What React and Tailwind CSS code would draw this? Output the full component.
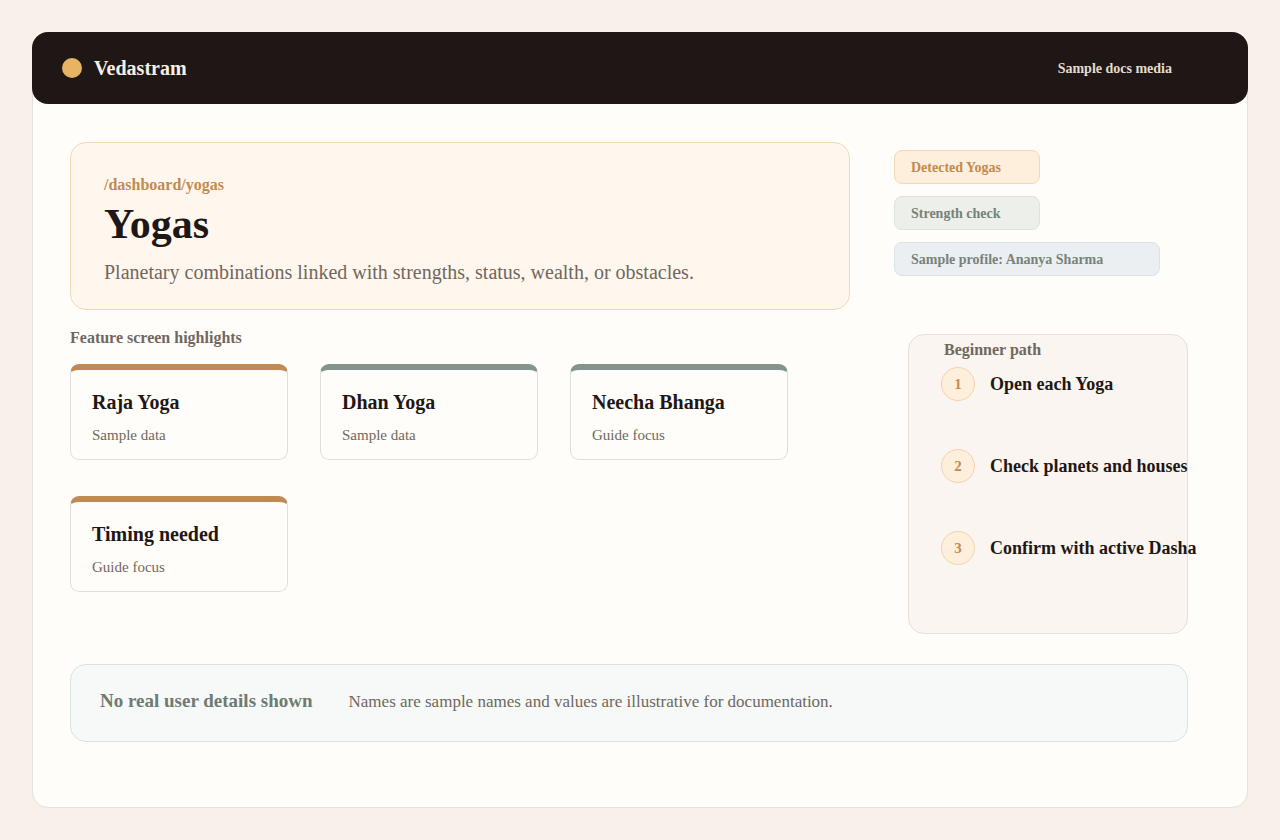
export default function App() {
  const serif = { fontFamily: '"Liberation Serif", "Times New Roman", serif' };
  const cards = [
    { title: "Raja Yoga", sub: "Sample data", bar: "border-t-[#bf8a55]" },
    { title: "Dhan Yoga", sub: "Sample data", bar: "border-t-[#83948f]" },
    { title: "Neecha Bhanga", sub: "Guide focus", bar: "border-t-[#83948f]" },
    { title: "Timing needed", sub: "Guide focus", bar: "border-t-[#bf8a55]" },
  ];
  const steps = ["Open each Yoga", "Check planets and houses", "Confirm with active Dasha"];
  return (
    <div className="min-h-screen bg-[#f7f0eb] p-8" style={serif}>
      <div className="w-[1216px] h-[776px] rounded-2xl border border-[#e6e0da] bg-[#fffdf9]">
        <header className="h-[72px] rounded-2xl bg-[#1f1715] flex items-center justify-between pl-[30px] pr-[76px] -mx-px -mt-px">
          <div className="flex items-center gap-3">
            <span className="w-5 h-5 rounded-full bg-[#e8b463]" />
            <span className="text-[20px] font-bold text-[#f6efe6]">Vedastram</span>
          </div>
          <span className="text-[14px] font-bold text-[#e5dbcf]">Sample docs media</span>
        </header>
        <div className="px-[37px] pt-[38px]">
          <div className="flex">
            <div className="w-[780px]">
              <section className="h-[168px] rounded-2xl border border-[#f2dab5] bg-[#fff7ee] pl-[33px] pt-[32px]">
                <div className="text-[16px] leading-[20px] font-bold text-[#c38a4f]">/dashboard/yogas</div>
                <h1 className="mt-[5px] text-[42px] leading-[48px] font-bold text-[#1f1715]">Yogas</h1>
                <p className="mt-[11px] text-[20px] leading-[26px] text-[#6f6760]">
                  Planetary combinations linked with strengths, status, wealth, or obstacles.
                </p>
              </section>
              <div className="mt-[18px] text-[16px] leading-[20px] font-bold text-[#6f6760]">Feature screen highlights</div>
              <div className="mt-[16px] grid grid-cols-[218px_218px_218px] gap-x-8 gap-y-9">
                {cards.map((c) => (
                  <div key={c.title} className={`h-[96px] rounded-[9px] border border-[#e4ddd5] border-t-[6px] ${c.bar} bg-[#fffdf9] px-[21px] pt-[20px]`}>
                    <div className="text-[20px] leading-[24px] font-bold text-[#1f1715]">{c.title}</div>
                    <div className="mt-[12px] text-[15px] leading-[18px] text-[#6f6760]">{c.sub}</div>
                  </div>
                ))}
              </div>
            </div>
            <div className="ml-[44px] pt-[8px]">
              <div className="flex flex-col gap-3">
                <div className="w-[146px] h-[34px] rounded-lg border border-[#f2d9b3] bg-[#fdefdc] flex items-center pl-[16px] text-[14px] font-bold text-[#c38a4f]">Detected Yogas</div>
                <div className="w-[146px] h-[34px] rounded-lg border border-[#dce3dc] bg-[#ecefea] flex items-center pl-[16px] text-[14px] font-bold text-[#77827a]">Strength check</div>
                <div className="w-[266px] h-[34px] rounded-lg border border-[#d9e3e6] bg-[#ebeff2] flex items-center pl-[16px] text-[14px] font-bold text-[#77827a]">Sample profile: Ananya Sharma</div>
              </div>
              <div className="mt-[58px] ml-[14px] w-[280px] h-[300px] rounded-2xl border border-[#e8dfd7] bg-[#faf5f0] pl-[35px] pt-[5px]">
                <div className="text-[16px] leading-[20px] font-bold text-[#6f6760]">Beginner path</div>
                <div className="mt-[7px] flex flex-col gap-[48px]">
                  {steps.map((s, i) => (
                    <div key={s} className="-ml-[3px] flex items-center gap-[15px] whitespace-nowrap">
                      <span className="w-[34px] h-[34px] shrink-0 rounded-full border border-[#f2d3aa] bg-[#fdefdc] flex items-center justify-center text-[15px] font-bold text-[#c38a4f]">{i + 1}</span>
                      <span className="text-[18px] font-bold text-[#1f1715]">{s}</span>
                    </div>
                  ))}
                </div>
              </div>
            </div>
          </div>
          <div className="mt-[30px] w-[1118px] h-[78px] rounded-2xl border border-[#dbe3de] bg-[#f6f9f7] flex items-center pl-[29px] pb-[3px]">
            <span className="text-[19px] font-bold text-[#6f7a72]">No real user details shown</span>
            <span className="ml-[36px] text-[17px] text-[#6f6760]">Names are sample names and values are illustrative for documentation.</span>
          </div>
        </div>
      </div>
    </div>
  );
}
